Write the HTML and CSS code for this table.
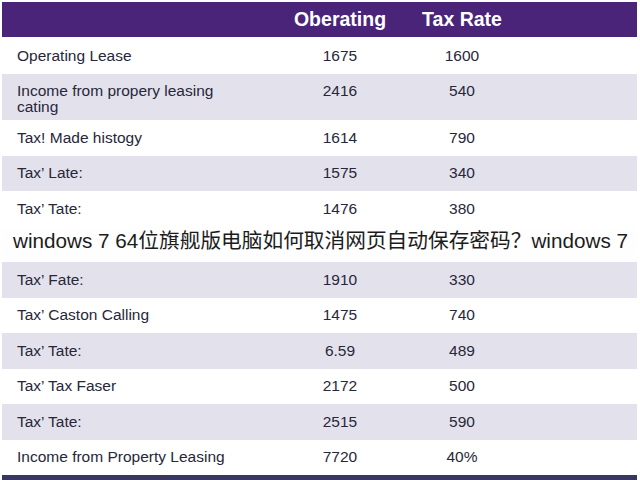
FILE: index.html
```html
<!DOCTYPE html>
<html>
<head>
<meta charset="utf-8">
<link rel="stylesheet" href="styles.css">
</head>
<body>
<div class="page">
  <div class="table">
    <div class="row head">
      <div class="cell label"></div>
      <div class="cell num">Oberating</div>
      <div class="cell num">Tax Rate</div>
    </div>
    <div class="row r1">
      <div class="cell label">Operating Lease</div>
      <div class="cell num">1675</div>
      <div class="cell num">1600</div>
    </div>
    <div class="row alt tall">
      <div class="cell label">Income from propery leasing<br>cating</div>
      <div class="cell num">2416</div>
      <div class="cell num">540</div>
    </div>
    <div class="row">
      <div class="cell label">Tax! Made histogy</div>
      <div class="cell num">1614</div>
      <div class="cell num">790</div>
    </div>
    <div class="row alt">
      <div class="cell label">Tax’ Late:</div>
      <div class="cell num">1575</div>
      <div class="cell num">340</div>
    </div>
    <div class="row">
      <div class="cell label">Tax’ Tate:</div>
      <div class="cell num">1476</div>
      <div class="cell num">380</div>
    </div>
    <div class="row alt hidden-row"></div>
    <div class="row alt">
      <div class="cell label">Tax’ Fate:</div>
      <div class="cell num">1910</div>
      <div class="cell num">330</div>
    </div>
    <div class="row">
      <div class="cell label">Tax’ Caston Calling</div>
      <div class="cell num">1475</div>
      <div class="cell num">740</div>
    </div>
    <div class="row alt">
      <div class="cell label">Tax’ Tate:</div>
      <div class="cell num">6.59</div>
      <div class="cell num">489</div>
    </div>
    <div class="row">
      <div class="cell label">Tax’ Tax Faser</div>
      <div class="cell num">2172</div>
      <div class="cell num">500</div>
    </div>
    <div class="row alt">
      <div class="cell label">Tax’ Tate:</div>
      <div class="cell num">2515</div>
      <div class="cell num">590</div>
    </div>
    <div class="row">
      <div class="cell label">Income from Property Leasing</div>
      <div class="cell num">7720</div>
      <div class="cell num">40%</div>
    </div>
  </div>
  <div class="caption">windows 7 64位旗舰版电脑如何取消网页自动保存密码？windows 7</div>
</div>
</body>
</html>
```

FILE: styles.css
```css
html, body {
  margin: 0;
  padding: 0;
  background: #ffffff;
}
.page {
  position: relative;
  width: 640px;
  height: 480px;
  overflow: hidden;
  font-family: "Liberation Sans", Arial, sans-serif;
  color: #28273a;
}
.table {
  margin: 2px 3px 0 2px;
  border-bottom: 5px solid #3a3662;
}
.row {
  display: grid;
  grid-template-columns: 283px 110px 134px 1fr;
  align-items: center;
  height: 35.5px;
  font-size: 15.5px;
}
.row.alt {
  background: #e3e2ec;
}
.row.head {
  height: 35px;
  background: #4a2479;
  color: #ffffff;
  font-weight: bold;
  font-size: 19.5px;
}
.row.r1 {
  height: 37px;
}
.row.tall {
  height: 46px;
  align-items: start;
}
.row.tall .cell {
  padding-top: 9px;
  line-height: 16px;
}
.label {
  padding-left: 15px;
  white-space: nowrap;
}
.num {
  text-align: center;
}
.caption {
  position: absolute;
  left: 0;
  top: 216px;
  width: 640px;
  height: 46px;
  box-sizing: border-box;
  padding-left: 13px;
  display: flex;
  align-items: center;
  background: rgba(255, 255, 255, 0.95);
  color: #1c1c1c;
  font-family: "Liberation Sans", "Noto Sans CJK SC", sans-serif;
  font-size: 20.7px;
  white-space: nowrap;
}
```
